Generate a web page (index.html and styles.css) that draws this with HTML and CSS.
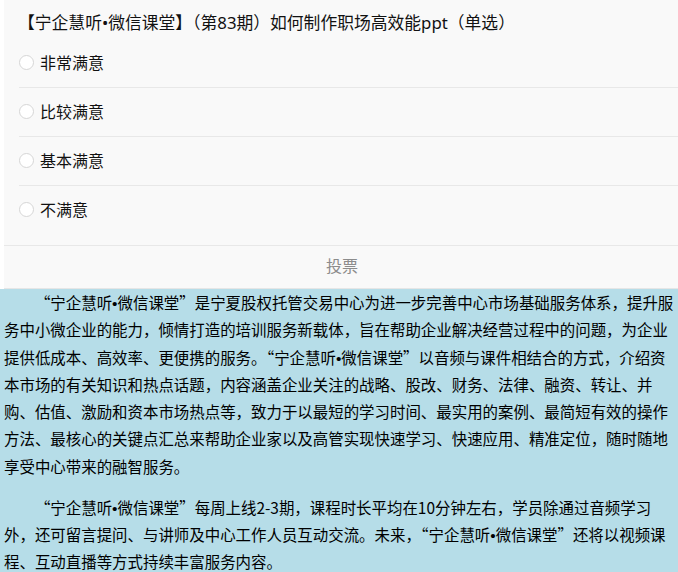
FILE: index.html
```html
<!DOCTYPE html>
<html lang="zh-CN">
<head>
    <meta charset="UTF-8">
    <meta name="viewport" content="width=device-width, initial-scale=1.0">
    <title>宁企慧听•微信课堂</title>
    <link rel="stylesheet" href="styles.css">
</head>
<body>
    <div class="vote-card">
        <h3 class="vote-title">【宁企慧听•微信课堂】（第83期）如何制作职场高效能ppt（单选）</h3>
        <ul class="vote-options">
            <li><label><input type="radio" name="vote">非常满意</label></li>
            <li><label><input type="radio" name="vote">比较满意</label></li>
            <li><label><input type="radio" name="vote">基本满意</label></li>
            <li><label><input type="radio" name="vote">不满意</label></li>
        </ul>
        <div class="vote-submit">投票</div>
    </div>

    <div class="intro">
        <p>“宁企慧听<span class="dot">•</span>微信课堂”是宁夏股权托管交易中心为进一步完善中心市场基础服务体系，提升服务中小微企业的能力，倾情打造的培训服务新载体，旨在帮助企业解决经营过程中的问题，为企业提供低成本、高效率、更便携的服务。“宁企慧听<span class="dot">•</span>微信课堂”以音频与课件相结合的方式，介绍资本市场的有关知识和热点话题，内容涵盖企业关注的战略、股改、财务、法律、融资、转让、并购、估值、激励和资本市场热点等，致力于以最短的学习时间、最实用的案例、最简短有效的操作方法、最核心的关键点汇总来帮助企业家以及高管实现快速学习、快速应用、精准定位，随时随地享受中心带来的融智服务。</p>
        <p>“宁企慧听<span class="dot">•</span>微信课堂”每周上线2-3期，课程时长平均在10分钟左右，学员除通过音频学习外，还可留言提问、与讲师及中心工作人员互动交流。未来，“宁企慧听<span class="dot">•</span>微信课堂”还将以视频课程、互动直播等方式持续丰富服务内容。</p>
    </div>
</body>
</html>
```

FILE: styles.css
```css
* {
    margin: 0;
    padding: 0;
    box-sizing: border-box;
}

body {
    font-family: "Noto Sans CJK SC", "Noto Sans", sans-serif;
    background: #fff;
    color: #000;
    overflow: hidden;
}

/* narrow bullet between 慧听 and 微信 */
.dot {
    font-family: "Liberation Sans", sans-serif;
    line-height: 0;
}

/* Vote card */
.vote-card {
    margin-left: 4px;
    background: #f9f9f9;
    border-bottom: 1px solid #e6e6e6;
    font-family: "Noto Sans", "Noto Sans CJK SC", sans-serif;
}

.vote-title {
    height: 39px;
    padding: 12px 14px 0;
    font-size: 16.8px;
    font-weight: normal;
    line-height: 22px;
    color: #111;
    white-space: nowrap;
}

.vote-options {
    list-style: none;
    padding: 0 0 11px 15px;
    border-bottom: 1px solid #e8e8e8;
}

.vote-options li {
    border-bottom: 1px solid #e8e8e8;
}

.vote-options li:last-child {
    border-bottom: none;
}

.vote-options label {
    display: flex;
    align-items: center;
    height: 48px;
    padding-bottom: 1px;
    font-size: 16px;
    line-height: 22px;
    color: #111;
}

.vote-options input[type="radio"] {
    appearance: none;
    -webkit-appearance: none;
    width: 15px;
    height: 15px;
    margin: 0 6px 0 0;
    border: 1px solid #d6d6d6;
    border-radius: 50%;
    background: #fff;
}

.vote-submit {
    height: 42px;
    line-height: 40px;
    padding-left: 2px;
    text-align: center;
    font-size: 16px;
    color: #8c8c8c;
}

/* Intro text */
.intro {
    background: #b6dde8;
    padding: 0 0 20px 4px;
    font-size: 15.45px;
    line-height: 27.3px;
}

.intro p {
    text-indent: 2em;
    margin-bottom: 13.7px;
}
```
